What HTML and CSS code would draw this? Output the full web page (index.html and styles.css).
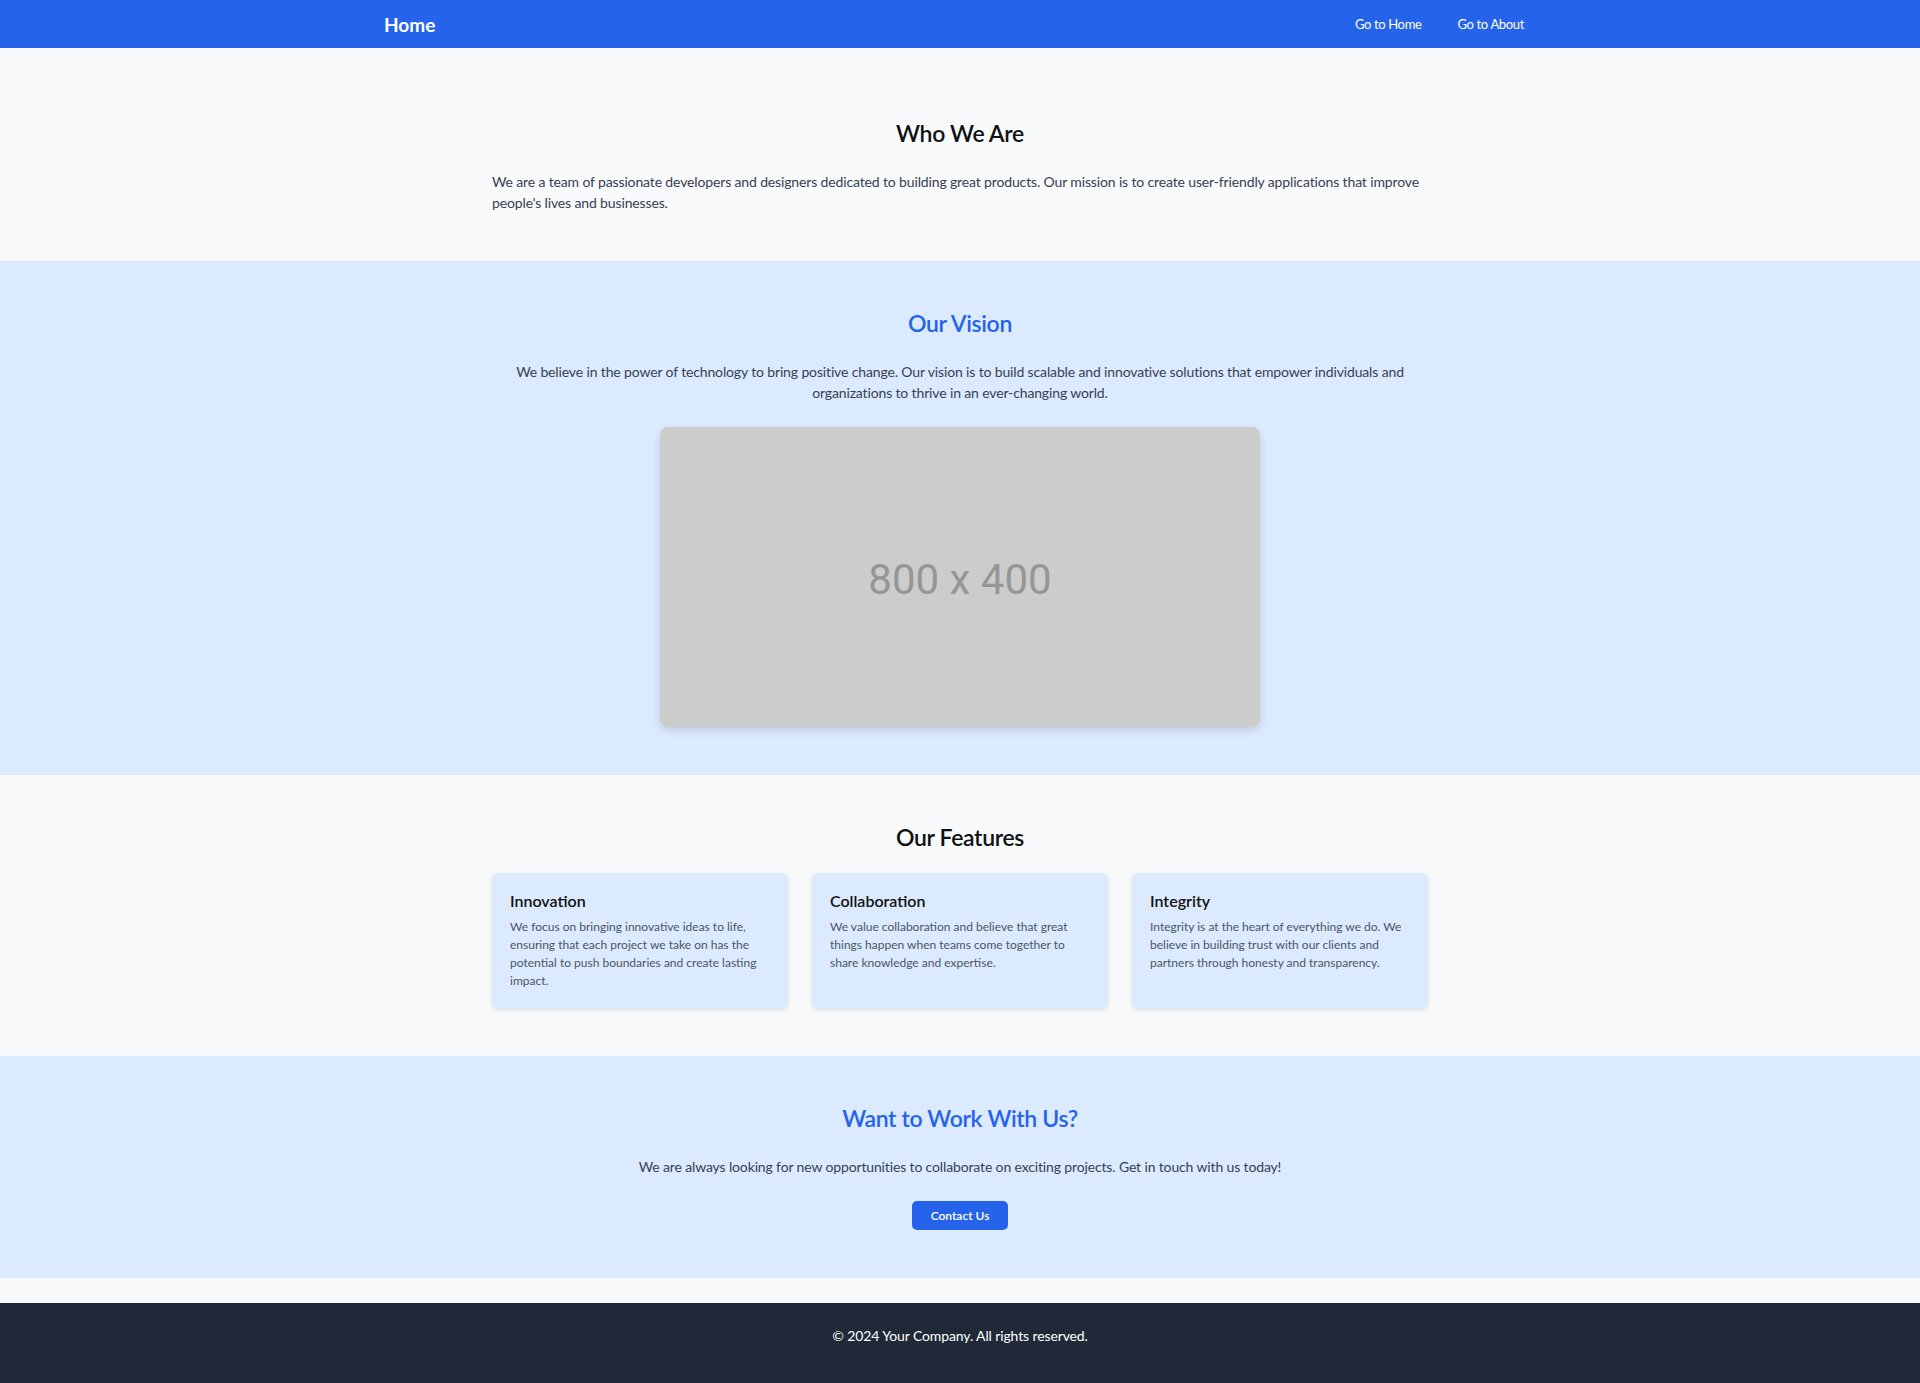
FILE: index.html
```html
<!DOCTYPE html>
<html lang="en">
<head>
<meta charset="utf-8">
<title>About</title>
<link rel="stylesheet" href="styles.css">
</head>
<body>
<header class="navbar">
  <div class="nav-inner">
    <a class="brand" href="#">Home</a>
    <nav class="nav-links">
      <a class="nav-link" href="#">Go to Home</a>
      <a class="nav-link" href="#">Go to About</a>
    </nav>
  </div>
</header>
<main class="main">
  <section class="section section-light section-first">
    <div class="container">
      <h2 class="section-title">Who We Are</h2>
      <p class="text">We are a team of passionate developers and designers dedicated to building great products. Our mission is to create user-friendly applications that improve people's lives and businesses.</p>
    </div>
  </section>
  <section class="section section-blue">
    <div class="container centered">
      <h2 class="section-title title-blue">Our Vision</h2>
      <p class="text">We believe in the power of technology to bring positive change. Our vision is to build scalable and innovative solutions that empower individuals and organizations to thrive in an ever-changing world.</p>
      <div class="placeholder"><span class="placeholder-label">800 x 400</span></div>
    </div>
  </section>
  <section class="section section-light">
    <div class="container">
      <h2 class="section-title title-tight">Our Features</h2>
      <div class="features">
        <div class="card">
          <h3 class="card-title">Innovation</h3>
          <p class="card-text">We focus on bringing innovative ideas to life, ensuring that each project we take on has the potential to push boundaries and create lasting impact.</p>
        </div>
        <div class="card">
          <h3 class="card-title">Collaboration</h3>
          <p class="card-text">We value collaboration and believe that great things happen when teams come together to share knowledge and expertise.</p>
        </div>
        <div class="card">
          <h3 class="card-title">Integrity</h3>
          <p class="card-text">Integrity is at the heart of everything we do. We believe in building trust with our clients and partners through honesty and transparency.</p>
        </div>
      </div>
    </div>
  </section>
  <section class="section section-blue">
    <div class="container centered">
      <h2 class="section-title title-blue">Want to Work With Us?</h2>
      <p class="text">We are always looking for new opportunities to collaborate on exciting projects. Get in touch with us today!</p>
      <a class="button" href="#">Contact Us</a>
    </div>
  </section>
</main>
<footer class="footer">
  <p class="footer-text">© 2024 Your Company. All rights reserved.</p>
</footer>
</body>
</html>
```
FILE: styles.css
```css
* { box-sizing: border-box; }
html, body { margin: 0; padding: 0; }
body {
  font-family: "Segoe UI", Lato, "Open Sans", sans-serif;
  background: #f8fafc;
  color: #374151;
}
a { text-decoration: none; color: inherit; }
h2, h3, p { margin: 0; }

.navbar {
  background: #2563eb;
  color: #ffffff;
  height: 48px;
}
.nav-inner {
  max-width: 1152px;
  margin: 0 auto;
  height: 100%;
  display: flex;
  align-items: center;
  justify-content: space-between;
}
.brand {
  font-size: 19px;
  font-weight: 700;
  color: #ffffff;
}
.nav-links {
  display: flex;
  gap: 12px;
}
.nav-link {
  font-size: 13px;
  letter-spacing: -0.35px;
  padding: 0 12px;
  color: #ffffff;
}

.main { padding-bottom: 25px; }

.section { padding: 48px 0; }
.section-first { padding-top: 71px; }
.section-light { background: #f8fafc; }
.section-blue { background: #dbeafe; }

.container {
  max-width: 960px;
  margin: 0 auto;
  padding: 0 12px;
}
.centered {
  display: flex;
  flex-direction: column;
  align-items: center;
  text-align: center;
}

.section-title {
  font-size: 23px;
  letter-spacing: -0.35px;
  line-height: 28px;
  font-weight: 600;
  color: #111111;
  text-align: center;
  margin-bottom: 24px;
}
.title-tight { margin-bottom: 22px; }
.title-blue { color: #2563eb; }

.text {
  font-size: 14px;
  letter-spacing: -0.14px;
  line-height: 21px;
  color: #374151;
}
.centered .text { margin-bottom: 24px; }

.placeholder {
  width: 600px;
  height: 300px;
  background: #cccccc;
  border-radius: 8px;
  box-shadow: 0 4px 10px rgba(0, 0, 0, 0.12);
  display: flex;
  align-items: center;
  justify-content: center;
  padding-top: 5px;
}
.placeholder-label {
  font-family: Roboto, "Liberation Sans", sans-serif;
  font-size: 42px;
  color: #969696;
}

.features {
  display: grid;
  grid-template-columns: repeat(3, 1fr);
  gap: 24px;
}
.card {
  background: #dbeafe;
  border-radius: 6px;
  padding: 16px 18px 18px;
  box-shadow: 0 2px 5px rgba(0, 0, 0, 0.12);
}
.card-title {
  font-size: 16px;
  line-height: 24px;
  font-weight: 600;
  color: #111111;
  margin-bottom: 5px;
}
.card-text {
  font-size: 12px;
  line-height: 18px;
  color: #4b5563;
}

.button {
  display: inline-block;
  background: #2563eb;
  color: #ffffff;
  font-size: 12px;
  font-weight: 600;
  line-height: 17px;
  padding: 6px 19px;
  border-radius: 5px;
}

.footer {
  background: #1f2937;
  color: #ffffff;
  height: 81px;
  padding-top: 22px;
  text-align: center;
}
.footer-text {
  font-size: 14px;
  letter-spacing: -0.12px;
  line-height: 21px;
}
```
